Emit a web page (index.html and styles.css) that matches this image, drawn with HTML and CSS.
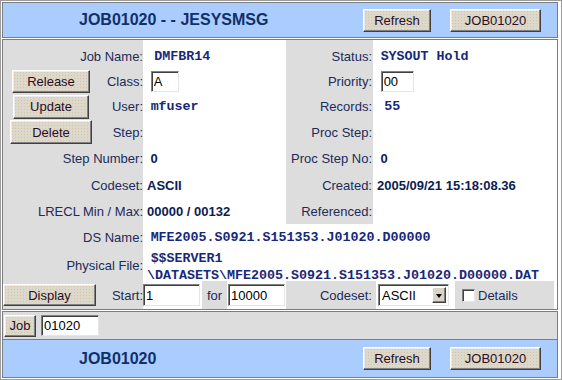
FILE: index.html
```html
<!DOCTYPE html>
<html>
<head>
<meta charset="utf-8">
<title>JOB01020 - - JESYSMSG</title>
<link rel="stylesheet" href="styles.css">
</head>
<body>
<div class="frame">
  <div class="bar bar-top">
    <h1 class="title">JOB01020 - - JESYSMSG</h1>
    <button class="btn btn-refresh">Refresh</button>
    <button class="btn btn-job">JOB01020</button>
  </div>

  <div class="details">
    <div class="lbl first">Job Name:</div>
    <div class="val first">&nbsp;&nbsp;<span class="mono">DMFBR14</span></div>
    <div class="lbl lbl2 first">Status:</div>
    <div class="val first">&nbsp;<span class="mono">SYSOUT Hold</span></div>

    <div class="lbl"><span class="slot"><button class="btn btn-release">Release</button></span>Class:</div>
    <div class="val">&nbsp;<input class="field field-class" value="A"></div>
    <div class="lbl lbl2">Priority:</div>
    <div class="val">&nbsp;<input class="field field-prio" value="00"></div>

    <div class="lbl"><span class="slot"><button class="btn btn-update">Update</button></span>User:</div>
    <div class="val">&nbsp;<span class="mono">mfuser</span></div>
    <div class="lbl lbl2">Records:</div>
    <div class="val">&nbsp;&nbsp;<span class="mono">55</span></div>

    <div class="lbl"><span class="slot"><button class="btn btn-delete">Delete</button></span>Step:</div>
    <div class="val"></div>
    <div class="lbl lbl2">Proc Step:</div>
    <div class="val"></div>

    <div class="lbl">Step Number:</div>
    <div class="val strong">&nbsp;0</div>
    <div class="lbl lbl2">Proc Step No:</div>
    <div class="val strong">&nbsp;0</div>

    <div class="lbl">Codeset:</div>
    <div class="val strong">ASCII</div>
    <div class="lbl lbl2">Created:</div>
    <div class="val strong">2005/09/21 15:18:08.36</div>

    <div class="lbl">LRECL Min / Max:</div>
    <div class="val strong">00000 / 00132</div>
    <div class="lbl lbl2">Referenced:</div>
    <div class="val"></div>

    <div class="lbl">DS Name:</div>
    <div class="val val-wide">&nbsp;<span class="mono">MFE2005.S0921.S151353.J01020.D00000</span></div>

    <div class="lbl">Physical File:</div>
    <div class="val val-wide val-wrap">&nbsp;<span class="mono">$$SERVER1<wbr>\DATASETS\MFE2005.S0921.S151353.J01020.D00000.DAT</span></div>

    <div class="cmd">
      <div class="cmd-start"><button class="btn btn-display">Display</button>Start:</div>
      <input class="field field-start" value="1">
      <div class="cmd-for">for</div>
      <input class="field field-count" value="10000">
      <div class="cmd-codeset">Codeset:</div>
      <span class="select">
        <select class="select-native"><option>ASCII</option><option>EBCDIC</option></select>
        <span class="select-arrow"></span>
      </span>
      <label class="cmd-details"><input type="checkbox" class="check">Details</label>
    </div>
  </div>

  <div class="jobbar">
    <button class="btn btn-jobgo">Job</button>
    <input class="field field-job" value="01020">
  </div>

  <div class="bar bar-bottom">
    <h2 class="title">JOB01020</h2>
    <button class="btn btn-refresh">Refresh</button>
    <button class="btn btn-job">JOB01020</button>
  </div>
</div>
</body>
</html>
```

FILE: styles.css
```css
* { box-sizing: border-box; }

html, body {
  margin: 0;
  padding: 0;
  background: #fff;
}

body {
  font-family: "Liberation Sans", Arial, sans-serif;
  font-size: 13px;
  color: #1c2b5a;
}

.frame {
  width: 562px;
  height: 380px;
  border: 1px solid #9c9c9c;
  padding: 1px 3px 1px 1px;
  display: flex;
  flex-direction: column;
}

/* blue title bars */
.bar {
  display: flex;
  align-items: center;
  background: #aaccff;
  border: 1px solid #7d7d7d;
  padding-right: 16px;
  flex: none;
}

.bar-top { height: 36px; }
.bar-bottom { height: 39px; }

.title {
  flex: 1;
  margin: 0;
  padding-left: 76px;
  font-size: 16px;
  font-weight: bold;
  color: #10306a;
}

/* classic textured buttons */
.btn {
  font-family: "Liberation Sans", Arial, sans-serif;
  font-size: 13px;
  color: #2b0d22;
  height: 23px;
  padding: 0;
  background-color: #dcd8cc;
  background-image: radial-gradient(circle, rgba(214, 168, 118, 0.45) 0.6px, transparent 0.9px);
  background-size: 3px 3px;
  border: 1px solid;
  border-color: #ffffff #404040 #404040 #ffffff;
  box-shadow: inset -1px -1px #808080, inset 1px 1px #ececec;
  flex: none;
}

.btn-refresh { width: 68px; }
.btn-job { width: 91px; margin-left: 19px; }
.btn-release { width: 78px; }
.btn-update { width: 76px; height: 24px; }
.btn-delete { width: 82px; height: 24px; }
.btn-display { width: 93px; height: 22px; }
.btn-jobgo { width: 32px; height: 22px; }

/* details grid */
.details {
  margin-top: 1px;
  height: 271px;
  flex: none;
  border: 1px solid #7d7d7d;
  display: grid;
  grid-template-columns: 140px 143px 87px 184px;
  grid-template-rows: 29px 25px 25px 26px 27px 26px 26px 26px 31px 28px;
}

.lbl {
  background: #dddddd;
  display: flex;
  align-items: center;
  justify-content: flex-end;
  white-space: nowrap;
}

.lbl2 { padding-right: 1px; }

.slot {
  width: 96px;
  margin-right: auto;
  display: flex;
  justify-content: center;
}

.val {
  background: #fff;
  display: flex;
  align-items: center;
  padding-left: 4px;
  white-space: nowrap;
  color: #0b1d52;
}

.first { padding-top: 3px; }

.val-wide { grid-column: 2 / -1; }

.val-wrap {
  display: block;
  white-space: normal;
  line-height: 16px;
}

.strong { font-weight: bold; }

.mono {
  font-family: "Liberation Mono", "Courier New", monospace;
  font-weight: bold;
  font-size: 13.33px;
  color: #17287a;
}

/* inputs */
.field {
  font-family: "Liberation Sans", Arial, sans-serif;
  font-size: 13px;
  color: #000;
  height: 21px;
  padding: 0 1px 0 2px;
  background: #fff;
  border: 1px solid;
  border-color: #808080 #e6e6e6 #e6e6e6 #808080;
  box-shadow: inset 1px 1px #404040;
  outline: none;
  flex: none;
}

.field-class { width: 28px; }
.field-prio { width: 33px; }
.field-start { width: 57px; height: 22px; align-self: center; }
.field-count { width: 57px; height: 22px; align-self: center; margin-left: 1px; }
.field-job { width: 58px; margin-left: 5px; }

/* command row */
.cmd {
  grid-column: 1 / -1;
  display: flex;
  align-items: stretch;
  background: #fff;
}

.cmd-start {
  width: 140px;
  background: #dddddd;
  display: flex;
  align-items: center;
  justify-content: space-between;
}

.cmd-for {
  width: 25px;
  margin-left: 2px;
  padding-left: 5px;
  background: #dddddd;
  display: flex;
  align-items: center;
}

.cmd-codeset {
  width: 90px;
  margin-left: 1px;
  padding-right: 4px;
  background: #dddddd;
  display: flex;
  align-items: center;
  justify-content: flex-end;
}

.select {
  width: 71px;
  height: 22px;
  margin-left: 2px;
  align-self: center;
  display: flex;
  align-items: center;
  background: #fff;
  border: 1px solid;
  border-color: #808080 #e6e6e6 #e6e6e6 #808080;
  box-shadow: inset 1px 1px #404040;
  padding: 2px 2px 2px 1px;
}

.select-native {
  -webkit-appearance: none;
  appearance: none;
  border: 0;
  outline: none;
  background: transparent;
  font-family: "Liberation Sans", Arial, sans-serif;
  font-size: 13px;
  color: #000;
  flex: 1;
  min-width: 0;
  padding: 0 0 0 2px;
  margin: 0;
}

.select-arrow {
  width: 14px;
  height: 16px;
  flex: none;
  background: #d8d4c8;
  border: 1px solid;
  border-color: #ffffff #404040 #404040 #ffffff;
  box-shadow: inset -1px -1px #808080;
  display: flex;
  align-items: center;
  justify-content: center;
}

.select-arrow::after {
  content: "";
  border-left: 3.5px solid transparent;
  border-right: 3.5px solid transparent;
  border-top: 4px solid #000;
  margin-top: 1px;
}

.cmd-details {
  width: 99px;
  margin-left: 6px;
  padding-left: 7px;
  background: #dddddd;
  display: flex;
  align-items: center;
}

.check {
  -webkit-appearance: none;
  appearance: none;
  width: 13px;
  height: 13px;
  margin: 0 3px 0 0;
  background: #fff;
  border: 1px solid;
  border-color: #808080 #e6e6e6 #e6e6e6 #808080;
  box-shadow: inset 1px 1px #404040;
}

/* job row */
.jobbar {
  height: 28px;
  flex: none;
  margin-top: 1px;
  border: 1px solid #7d7d7d;
  border-bottom: 0;
  background: #dddddd;
  display: flex;
  align-items: center;
  padding-left: 1px;
}
```
